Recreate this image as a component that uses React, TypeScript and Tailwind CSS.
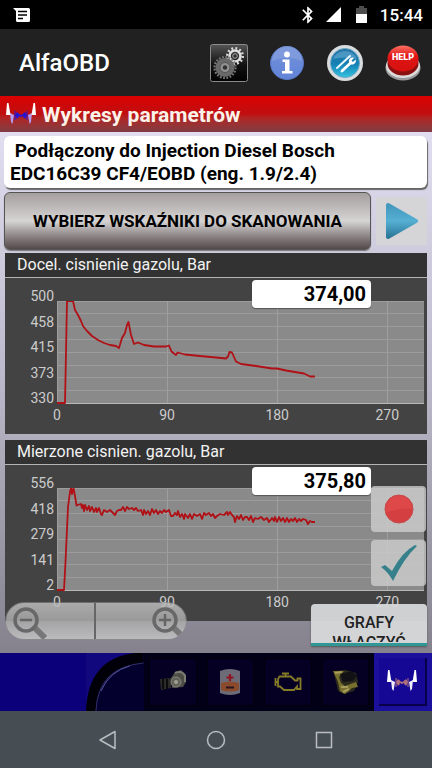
import React from "react";

const TARGET_PRESSURE =
  "0,102 8,102 10,0 16,0 18,9 21,14 24,20 26,25 30,30 35,35 41,39 47,42 53,44 59,45 62,47 65,37 68,32 70,24 71.5,21 74,34 77,43 81,41.5 87,44 97,45.5 109,45.5 112,44.5 114.5,50.5 119,54 120.5,51.5 128,53.5 143,55 159,56.5 169,57.5 171,55.5 172.5,51 175,51.5 179,60.5 184,63 199,65 215,67.5 220,67.5 229,69.5 247,72.5 253,75.5 258,75.5";

const MEASURED_PRESSURE =
  "0,102 7,102 8.5,74 11,19 13,4 14,0 15,6 16.5,0 18,8 19.5,17.5 22,16.5 24,16 25,20 26,17 27,23 28,17 30,22 32,18 33,23 35,19 37,24 39,20 40,24 42,20 44,26 45,27 47,22 50,24 53,22 55,24 58,27 60,23 62,22 64,22 66,19 68,23 70,19 72,21 75,20 77,22 79,20 81,23 84,22 86,27 87,22 89,26 91,23 93,27 95,21 97,25 99,22 101,26 103,23 105,25 107,22 109,24 112,22 114,28 116,28 118,25 120,27 121,23 123,29 125,26 127,31 128,26 131,30 133,26 135,31 137,26 140,28 143,26 145,31 147,25 149,27 152,25 154,28 156,26 158,30 160,28 163,26 167,27 170,24 171,27 173,24 175,27 177,29 178,34 180,28 182,31 184,27 186,32 188,29 190,29 192,32 194,28 196,34 198,30 201,31 204,29 207,32 210,30 212,34 215,30 217,33 218,29 220,34 222,29 224,33 226,30 228,34 230,30 232,34 234,31 236,33 238,30 240,34 242,31 244,33 246,31 249,32 251,36 253,33 255,34 258,34";

function Plot({ points }: { points: string }) {
  return (
    <svg className="block h-[103px] w-full bg-[#8a8a8a]" viewBox="0 0 367 103" preserveAspectRatio="none" aria-hidden="true">
      {[0.5, 12.5, 25.5, 38.5, 51.5, 64.5, 76.5, 89.5].map((y) => (
        <path key={y} d={`M0 ${y}H367`} stroke="#9c9c9c" strokeWidth="1" vectorEffect="non-scaling-stroke" />
      ))}
      {[0.5, 110.5, 220.5, 330.5].map((x) => (
        <path key={x} d={`M${x} 0V103`} stroke="#9e9e9e" strokeWidth="1" vectorEffect="non-scaling-stroke" />
      ))}
      <path d="M0 102.5H367" stroke="#b8b8b8" strokeWidth="1" vectorEffect="non-scaling-stroke" />
      <polyline points={points} fill="none" stroke="#b01116" strokeWidth="1.8" strokeLinejoin="round" vectorEffect="non-scaling-stroke" />
    </svg>
  );
}

type ChartProps = { title: string; value: string; ticks: string[]; points: string };

function Chart({ title, value, ticks, points }: ChartProps) {
  return (
    <section className="relative bg-[#434343]">
      <h2 className="h-[25px] border-b border-[#b4b4b4] bg-[#323232] px-3 text-base leading-6 text-[#f2f2f2]">{title}</h2>
      <div className="flex h-[156px] pr-[3px] text-sm leading-4 text-[#cccccc]">
        <div className="flex h-[128px] w-[52px] flex-col justify-between pt-[10px] pr-[3px] text-right">
          {ticks.map((t) => (
            <span key={t}>{t}</span>
          ))}
        </div>
        <div className="min-w-0 flex-1 pt-[23px]">
          <Plot points={points} />
          <div className="-ml-[15%] flex w-[120%] pt-[3px] text-center">
            {["0", "90", "180", "270"].map((t) => (
              <span key={t} className="w-1/4">{t}</span>
            ))}
          </div>
        </div>
      </div>
      <output className="absolute top-[27px] right-14 h-7 w-[119px] rounded bg-white pr-[5px] text-right text-xl leading-7 font-bold text-black shadow-[0_1px_1px_#555]">
        {value}
      </output>
    </section>
  );
}

function WaveIcon({ className, core, tips }: { className: string; core: string; tips: string }) {
  return (
    <svg className={className} viewBox="0 0 32 24" aria-hidden="true">
      <path d="M10 13 12 10 14 12 16 13 18 12 20 10 22 13 20 17 18 14 16 15 14 14 12 17Z" fill={core} />
      <path d="M10 9V18M22 9V18M13 11V16M19 11V16" stroke={core} strokeWidth="1" />
      <path d="M5 11 9 13 7.500 22 6 20ZM27 11 23 13 24.500 22 26 20Z" fill={tips} />
      <path d="M2 1H3.500L5.500 13H1ZM30 1H28.500L26.500 13H31Z" fill="#fff" />
    </svg>
  );
}

function GearsIcon() {
  return (
    <svg className="size-[38px]" viewBox="0 0 38 38" aria-hidden="true">
      <defs>
        <linearGradient id="gearBox" x2="0" y2="1">
          <stop stopColor="#555" />
          <stop offset=".55" stopColor="#111" />
          <stop offset="1" stopColor="#000" />
        </linearGradient>
      </defs>
      <rect x=".5" y=".5" width="37" height="37" rx="2" fill="url(#gearBox)" stroke="#8b8b8b" />
      <circle cx="25" cy="12" r="7.800" fill="none" stroke="#ddd" strokeWidth="2.400" strokeDasharray="1.900 2.200" />
      <circle cx="25" cy="12" r="5.500" fill="none" stroke="#e0e0e0" strokeWidth="2.600" />
      <circle cx="25" cy="12" r="2.300" fill="none" stroke="#aaa" strokeWidth="1" />
      <circle cx="15" cy="23.500" r="10.500" fill="none" stroke="#777" strokeWidth="2.200" strokeDasharray="1.800 1.500" />
      <circle cx="15" cy="23.500" r="9.500" fill="#696969" />
      <circle cx="15" cy="23.500" r="5" fill="#929292" stroke="#555" />
      <circle cx="15" cy="23.500" r="2.200" fill="#333" />
    </svg>
  );
}

function InfoIcon() {
  return (
    <svg className="size-[38px]" viewBox="0 0 38 38" aria-hidden="true">
      <defs>
        <linearGradient id="infoDisc" x2="0" y2="1">
          <stop stopColor="#7391da" />
          <stop offset="1" stopColor="#6184d8" />
        </linearGradient>
      </defs>
      <circle cx="19" cy="19" r="16.500" fill="url(#infoDisc)" stroke="#5575c0" />
      <path d="M4 17A15 15 0 0 1 34 17Q19 10 4 17Z" fill="#8ba4e0" opacity=".6" />
      <circle cx="19" cy="10.500" r="2.900" fill="#fff" />
      <path d="M14.500 15.500H21.500V27H24.500V29.500H14V27H17V18H14.500Z" fill="#fff" />
    </svg>
  );
}

function ToolsIcon() {
  return (
    <svg className="size-[38px]" viewBox="0 0 38 38" aria-hidden="true">
      <defs>
        <linearGradient id="toolDisc" x2="0" y2="1">
          <stop stopColor="#2370a3" />
          <stop offset=".55" stopColor="#1482b5" />
          <stop offset="1" stopColor="#35c4e2" />
        </linearGradient>
      </defs>
      <circle cx="19" cy="19" r="18" fill="#d9dcde" />
      <circle cx="19" cy="19" r="14.500" fill="url(#toolDisc)" stroke="#6aa7c4" strokeWidth="1" />
      <path d="M7 15A13 13 0 0 1 31 15Q19 12 7 15Z" fill="#78b5dc" opacity=".5" />
      <path d="M11 24 24 12" stroke="#e9f8ff" strokeWidth="2" strokeLinecap="round" />
      <path d="M16 27 25 18.500" stroke="#fff" strokeWidth="2.800" strokeLinecap="round" />
      <path d="M24 20C21 16 25 12 28 14L25.500 16.500 27 18 29.500 15.500C31 18 28 22 24 20Z" fill="#fff" />
    </svg>
  );
}

function HelpIcon() {
  return (
    <svg className="size-[38px]" viewBox="0 0 38 38" aria-hidden="true">
      <defs>
        <linearGradient id="helpCap" x2="0" y2="1">
          <stop stopColor="#fb7164" />
          <stop offset=".4" stopColor="#e11616" />
          <stop offset="1" stopColor="#d50f0f" />
        </linearGradient>
      </defs>
      <ellipse cx="19" cy="24" rx="17.500" ry="12.500" fill="#99999b" />
      <ellipse cx="19" cy="22" rx="17" ry="12" fill="#dcdcdc" />
      <ellipse cx="19" cy="19.500" rx="15.500" ry="12" fill="#8c1010" />
      <ellipse cx="19" cy="14.500" rx="15.500" ry="13" fill="url(#helpCap)" />
      <text x="19" y="16" textAnchor="middle" fontFamily="Roboto, sans-serif" fontWeight="900" fontSize="9" fill="#fff">HELP</text>
    </svg>
  );
}

function Magnifier({ plus }: { plus?: boolean }) {
  return (
    <svg className="h-8 w-[34px]" viewBox="0 0 34 32" fill="none" aria-hidden="true">
      <path d="M20 19 32 31" stroke="#777" strokeWidth="6" />
      <circle cx="13" cy="13" r="11" stroke="#686868" strokeWidth="3.500" />
      <path d={plus ? "M7 13H19M13 7V19" : "M7 13H19"} stroke="#666" strokeWidth="2.500" />
    </svg>
  );
}

function InjectorIcon() {
  return (
    <svg className="h-6 w-8" viewBox="0 0 32 24" aria-hidden="true">
      <path d="M3 9 14 8V18L4 20Z" fill="#2b2c2a" />
      <path d="M6 9V19M10 9V19" stroke="#0c0c0c" strokeWidth="2" />
      <path d="M14 8 18 2 24 0 29 5 29 12 26 17 15 18Z" fill="#4d4d48" />
      <path d="M18 3Q25 0 28 6L28 12" fill="none" stroke="#7c7c72" strokeWidth="2" />
      <circle cx="19" cy="12" r="5" fill="#62625b" stroke="#85857a" />
      <circle cx="19" cy="12" r="2" fill="#a0a093" />
    </svg>
  );
}

function AirbagIcon() {
  return (
    <svg className="h-7 w-[22px]" viewBox="0 0 22 28" aria-hidden="true">
      <path d="M1 3Q11-1 21 3V25Q11 29 1 25Z" fill="#6d6b78" />
      <path d="M2 15Q11 12 20 15V22Q11 25 2 22Z" fill="#8a4a2c" />
      <path d="M7 18.500H15V20.500H7Z" fill="#2a1520" />
      <path d="M11 6V13M7.500 9.500H14.500" stroke="#8f1420" strokeWidth="2.200" />
    </svg>
  );
}

function EngineIcon() {
  return (
    <svg className="h-5 w-7" viewBox="0 0 28 20" fill="none" stroke="#857a26" strokeWidth="1.800" aria-hidden="true">
      <path d="M8 1.500H15M11.500 1.500V4.500M5 4.500H17L21 8.500H23.500V6.500H26.500V17H23V14.500L20 18H10L6 14.500H4V8L5 4.500M1.500 6V14M1.500 10H4" />
    </svg>
  );
}

function GearboxIcon() {
  return (
    <svg className="h-[26px] w-7" viewBox="0 0 28 26" aria-hidden="true">
      <path d="M1 2 13 1 24 4 26 13 22 22 12 25 6 22 3 9Z" fill="#2c2a1c" />
      <path d="M1 2H12L7 8 9 14 13 17 24 13 26 18 20 19 13 25 8 22 6 13Z" fill="#77702f" />
      <path d="M8 5 20 2 25 7 21 12 11 13Z" fill="#121216" />
      <path d="M9 18 16 18M3 4 10 3M11 23 17 20" stroke="#a89c5a" strokeWidth="2" />
    </svg>
  );
}

const MODULES = [
  { label: "Wtryskiwacze", icon: <InjectorIcon /> },
  { label: "Poduszki", icon: <AirbagIcon /> },
  { label: "Silnik", icon: <EngineIcon /> },
  { label: "Skrzynia", icon: <GearboxIcon /> },
];

const ACTIONS = [
  { label: "Ustawienia", icon: <GearsIcon /> },
  { label: "Informacje", icon: <InfoIcon /> },
  { label: "Narzędzia", icon: <ToolsIcon /> },
  { label: "Pomoc", icon: <HelpIcon /> },
];

export default function App() {
  return (
    <div className="flex min-h-screen flex-col bg-black font-[Roboto,sans-serif]">
      <div className="flex h-[29px] items-center justify-between pr-[9px] pl-[13px] text-white">
        <svg className="h-[14px] w-[17px]" viewBox="0 0 17 14" aria-hidden="true">
          <path d="M0 0H15.500Q17 0 17 1.500V12.500Q17 14 15.500 14H4.500Q3 14 3 12.500V3Z" fill="#fff" />
          <path d="M5 3.500H14M5 7H14M5 10.500H10" stroke="#000" strokeWidth="1.300" />
        </svg>
        <div className="flex items-center">
          <svg className="h-5 w-5" viewBox="0 0 24 24" fill="#fff" aria-hidden="true">
            <path d="M17.710 7.710L12 2h-1v7.590L6.410 5 5 6.410 10.590 12 5 17.590 6.410 19 11 14.410V22h1l5.710-5.710-4.300-4.290 4.300-4.290zM13 5.830l1.880 1.880L13 9.590V5.830zm1.880 10.460L13 18.170v-3.760l1.880 1.880z" />
          </svg>
          <svg className="ml-2 h-[15px] w-[15px]" viewBox="0 0 15 15" aria-hidden="true">
            <path d="M15 0V15H0Z" fill="#fff" />
          </svg>
          <svg className="ml-[15px] h-[17px] w-[11px]" viewBox="0 0 11 17" aria-hidden="true">
            <path d="M0 2H3V0H8V2H11V9H0Z" fill="#4d4d4d" />
            <path d="M0 8H11V17H0Z" fill="#fff" />
          </svg>
          <time className="ml-[13px] text-[17px] leading-5 font-medium">15:44</time>
        </div>
      </div>

      <header className="flex h-[67px] items-center justify-between bg-[#212121] pr-[10px] pl-[19px]">
        <h1 className="text-2xl font-medium text-white">AlfaOBD</h1>
        <div className="flex gap-5">
          {ACTIONS.map((a) => (
            <button key={a.label} type="button" aria-label={a.label}>{a.icon}</button>
          ))}
        </div>
      </header>

      <div className="flex h-9 items-center gap-[5px] bg-linear-to-b from-[#db0000] via-[#bf0e10] to-[#7f3b42] px-[5px]">
        <WaveIcon className="h-6 w-8" core="#2414d8" tips="#b39af0" />
        <h2 className="pt-0.5 text-[21px] leading-[34px] font-bold text-[#fbf3ea]">Wykresy parametrów</h2>
      </div>

      <main className="relative flex-1 bg-linear-to-b from-[#e0def0] via-[#b9b6c7] to-[#85828e] pt-1 pr-[5px] pb-8 pl-1">
        <p className="rounded-md bg-white px-[6px] py-[3px] text-[19px] leading-[23px] font-bold text-black shadow-[1px_2px_1px_#666]">
          <span className="whitespace-pre"> Podłączony do Injection Diesel Bosch</span>
          <br />
          EDC16C39 CF4/EOBD (eng. 1.9/2.4)
        </p>

        <div className="mt-1 flex h-[58px] items-center gap-[5px]">
          <button
            type="button"
            className="h-[58px] flex-1 rounded-md border border-[#555] bg-linear-to-b from-[#a69f9f] via-[#d6d4d4] to-[#54484a] pt-0.5 text-[17px] font-bold text-black shadow-[0_1px_1px_#777]"
          >
            WYBIERZ WSKAŹNIKI DO SKANOWANIA
          </button>
          <button type="button" aria-label="Start" className="flex h-12 w-[51px] items-center justify-center bg-[#d5d5d8]">
            <svg className="h-[38px] w-8" viewBox="0 0 32 38" aria-hidden="true">
              <defs>
                <linearGradient id="playFill" x2="0" y2="1">
                  <stop stopColor="#4497bd" />
                  <stop offset=".5" stopColor="#55b0d3" />
                  <stop offset="1" stopColor="#2c7899" />
                </linearGradient>
              </defs>
              <path d="M2 3 30 19 2 35Z" fill="url(#playFill)" stroke="url(#playFill)" strokeWidth="4" strokeLinejoin="round" />
            </svg>
          </button>
        </div>

        <div className="mt-[3px] ml-px flex flex-col gap-[6px]">
          <Chart title="Docel. cisnienie gazolu, Bar" value="374,00" ticks={["500", "458", "415", "373", "330"]} points={TARGET_PRESSURE} />
          <Chart title="Mierzone cisnien. gazolu, Bar" value="375,80" ticks={["556", "418", "279", "141", "2"]} points={MEASURED_PRESSURE} />
        </div>

        <div className="absolute right-[6px] bottom-[67px] flex flex-col gap-2">
          <button type="button" aria-label="Nagrywanie" className="flex h-[46px] w-[55px] items-center justify-center rounded-sm bg-[#cdcdcd]/80">
            <svg className="size-[30px]" viewBox="0 0 30 30" aria-hidden="true">
              <circle cx="15" cy="15" r="14" fill="#d43f41" stroke="#c64a4c" />
              <path d="M2 15A13 13 0 0 1 28 15Q15 13 2 19Z" fill="#de4849" />
            </svg>
          </button>
          <button type="button" aria-label="Zatwierdź" className="flex h-[46px] w-[55px] items-center justify-center rounded-sm bg-[#cdcdcd]/80">
            <svg className="h-9 w-9" viewBox="0 0 36 36" aria-hidden="true">
              <path d="M0 22 4 20 11 26Q21 7 34 0L36 1Q23 13 12 36Q7 27 0 22Z" fill="#35808b" />
            </svg>
          </button>
        </div>

        <div className="absolute bottom-[13px] left-[5px] grid h-[38px] w-[182px] grid-cols-2 overflow-hidden rounded-full border border-[#8c8c8c]/60">
          <button type="button" aria-label="Pomniejsz" className="flex items-end border-r-2 border-[#666] bg-linear-to-b from-[#bdbdbd]/85 via-[#a8a8a8]/85 to-[#c4c4c4]/85 pl-[7px]">
            <Magnifier />
          </button>
          <button type="button" aria-label="Powiększ" className="flex items-end justify-end bg-linear-to-b from-[#bdbdbd]/85 via-[#a8a8a8]/85 to-[#c4c4c4]/85">
            <Magnifier plus />
          </button>
        </div>

        <button
          type="button"
          aria-pressed="true"
          className="absolute right-[5px] bottom-[7px] h-[42px] w-[116px] rounded-t-sm border-b-[3px] border-[#2f9795] bg-[#d7d8d9]/95 px-5 pt-2 shadow-[0_1px_2px_#555]"
        >
          <span className="block h-[29px] overflow-hidden text-base leading-5 font-medium text-[#222]">GRAFY WŁĄCZYĆ</span>
        </button>
      </main>

      <nav className="grid h-[58px] grid-cols-[3fr_2fr_2fr_2fr_2fr_2fr_2fr] bg-[#020016]" aria-label="Moduły">
        <div className="bg-[#0b0079]" />
        <svg className="h-[58px] w-full" viewBox="0 0 58 58" preserveAspectRatio="none" aria-hidden="true">
          <path d="M0 0H58V58H0Z" fill="#10087c" />
          <path d="M0 58Q2 5 50 0H58V58Z" fill="#010008" />
          <path d="M10 58Q10 16 54 10H58V58Z" fill="#04002e" />
          <path d="M10 58Q12 14 58 10" fill="none" stroke="#30306a" strokeWidth="1" />
          <path d="M15 38Q24 18 44 13" fill="none" stroke="#54549a" strokeWidth="1" />
        </svg>
        {MODULES.map((m) => (
          <button key={m.label} type="button" aria-label={m.label} className="p-[5px]">
            <span className="flex h-full items-center justify-center border border-[#02000a] bg-[#050023]">{m.icon}</span>
          </button>
        ))}
        <button type="button" aria-label="Wykresy" aria-current="page" className="bg-[#1b109c] p-[5px]">
          <span className="flex h-full items-center justify-center border-r-2 border-b-2 border-[#080048] bg-[#140894]">
            <WaveIcon className="h-6 w-8" core="#b0707c" tips="#f0ecff" />
          </span>
        </button>
      </nav>

      <nav className="flex h-[57px] items-center justify-center gap-[88px] bg-[#474e53]" aria-label="System">
        <button type="button" aria-label="Wstecz">
          <svg className="size-5" viewBox="0 0 20 20" fill="none" stroke="#b9bdbf" strokeWidth="1.500" strokeLinejoin="round" aria-hidden="true">
            <path d="M17 1.500V18.500L2 10Z" />
          </svg>
        </button>
        <button type="button" aria-label="Ekran główny">
          <svg className="size-5" viewBox="0 0 20 20" fill="none" stroke="#b9bdbf" strokeWidth="1.500" aria-hidden="true">
            <circle cx="10" cy="10" r="8.500" />
          </svg>
        </button>
        <button type="button" aria-label="Ostatnie">
          <svg className="size-5" viewBox="0 0 20 20" fill="none" stroke="#b9bdbf" strokeWidth="1.500" aria-hidden="true">
            <path d="M2.500 2.500H17.500V17.500H2.500Z" />
          </svg>
        </button>
      </nav>
    </div>
  );
}
